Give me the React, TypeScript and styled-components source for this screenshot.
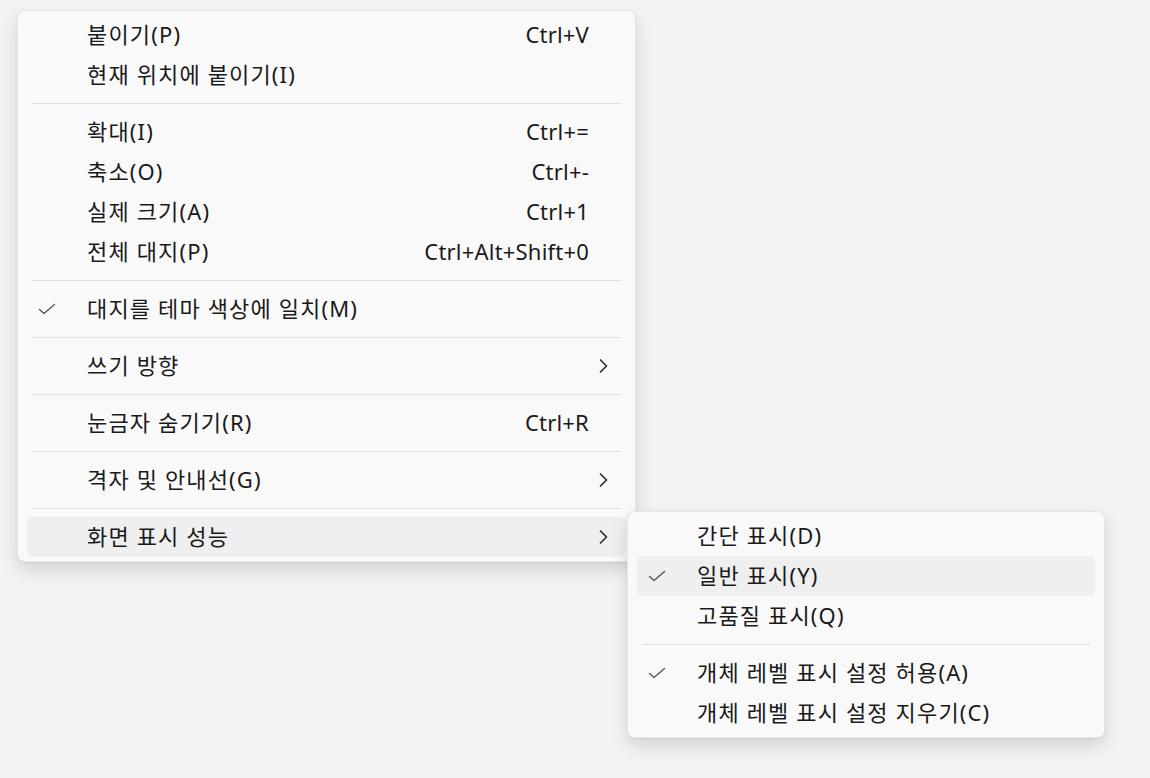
import styled, { createGlobalStyle } from "styled-components"

const GlobalStyle = createGlobalStyle`
	html, body {
		margin: 0;
		padding: 0;
		background: #f3f3f4;
	}
	body {
		font-family: "Noto Sans", "Noto Sans CJK KR", sans-serif;
		color: #1a1a1a;
	}
`

const Page = styled.div`
	width: 1150px;
	height: 778px;
	padding: 10px 0 0 17px;
	box-sizing: border-box;
`

const MenuPanel = styled.div<{ $width: number }>`
	position: relative;
	width: ${(p) => p.$width}px;
	box-sizing: border-box;
	padding: 4px 0;
	background: #f9f9f9;
	border: 1px solid rgba(0, 0, 0, 0.07);
	border-radius: 8px;
	box-shadow: 0 8px 18px rgba(0, 0, 0, 0.13), 0 1px 3px rgba(0, 0, 0, 0.06);
`

const SubMenuPanel = styled(MenuPanel)`
	position: absolute;
	left: 609px;
	top: 500px;
	z-index: 2;
`

const Row = styled.div<{ $active?: boolean }>`
	display: grid;
	grid-template-columns: 60px 1fr auto 37px;
	align-items: center;
	height: 40px;
	box-sizing: border-box;
	padding-bottom: 3px;
	margin: 0 9px;
	border-radius: 6px;
	background: ${(p) => (p.$active ? "#efefef" : "transparent")};
	font-size: 22px;
	line-height: 1;
	white-space: nowrap;
`

const CheckCell = styled.div`
	display: flex;
	align-items: center;
	padding: 3px 0 0 11px;
	color: #555555;
`

const Label = styled.span`
	letter-spacing: 1.15px;
`

const Shortcut = styled.span`
	text-align: right;
	letter-spacing: 0.2px;
`

const ChevronCell = styled.div`
	display: flex;
	align-items: center;
	padding: 3px 0 0 9px;
	color: #2e2e2e;
`

const Separator = styled.div`
	height: 1px;
	margin: 8px 14px;
	background: #e0e0e0;
`

const Check = () => (
	<svg width="18" height="12" viewBox="0 0 18 12" fill="none">
		<path d="M1.5 6.5 L6 10.5 L16.5 1.5" stroke="currentColor" strokeWidth="1.4" strokeLinecap="round" strokeLinejoin="round" />
	</svg>
)

const Chevron = () => (
	<svg width="11" height="16" viewBox="0 0 11 16" fill="none">
		<path d="M2.5 2 L8.5 8 L2.5 14" stroke="currentColor" strokeWidth="1.7" strokeLinecap="round" strokeLinejoin="round" />
	</svg>
)

type Item = {
	label?: string
	shortcut?: string
	checked?: boolean
	submenu?: boolean
	active?: boolean
	separator?: boolean
}

const mainItems: Item[] = [
	{ label: "붙이기(P)", shortcut: "Ctrl+V" },
	{ label: "현재 위치에 붙이기(I)" },
	{ separator: true },
	{ label: "확대(I)", shortcut: "Ctrl+=" },
	{ label: "축소(O)", shortcut: "Ctrl+-" },
	{ label: "실제 크기(A)", shortcut: "Ctrl+1" },
	{ label: "전체 대지(P)", shortcut: "Ctrl+Alt+Shift+0" },
	{ separator: true },
	{ label: "대지를 테마 색상에 일치(M)", checked: true },
	{ separator: true },
	{ label: "쓰기 방향", submenu: true },
	{ separator: true },
	{ label: "눈금자 숨기기(R)", shortcut: "Ctrl+R" },
	{ separator: true },
	{ label: "격자 및 안내선(G)", submenu: true },
	{ separator: true },
	{ label: "화면 표시 성능", submenu: true, active: true },
]

const subItems: Item[] = [
	{ label: "간단 표시(D)" },
	{ label: "일반 표시(Y)", checked: true, active: true },
	{ label: "고품질 표시(Q)" },
	{ separator: true },
	{ label: "개체 레벨 표시 설정 허용(A)", checked: true },
	{ label: "개체 레벨 표시 설정 지우기(C)" },
]

const MenuRows = ({ items }: { items: Item[] }) => (
	<>
		{items.map((item, i) =>
			item.separator ? (
				<Separator key={i} />
			) : (
				<Row key={i} $active={item.active}>
					<CheckCell>{item.checked && <Check />}</CheckCell>
					<Label>{item.label}</Label>
					<Shortcut>{item.shortcut}</Shortcut>
					<ChevronCell>{item.submenu && <Chevron />}</ChevronCell>
				</Row>
			)
		)}
	</>
)

export default function App() {
	return (
		<Page>
			<GlobalStyle />
			<MenuPanel $width={619}>
				<MenuRows items={mainItems} />
				<SubMenuPanel $width={478}>
					<MenuRows items={subItems} />
				</SubMenuPanel>
			</MenuPanel>
		</Page>
	)
}
